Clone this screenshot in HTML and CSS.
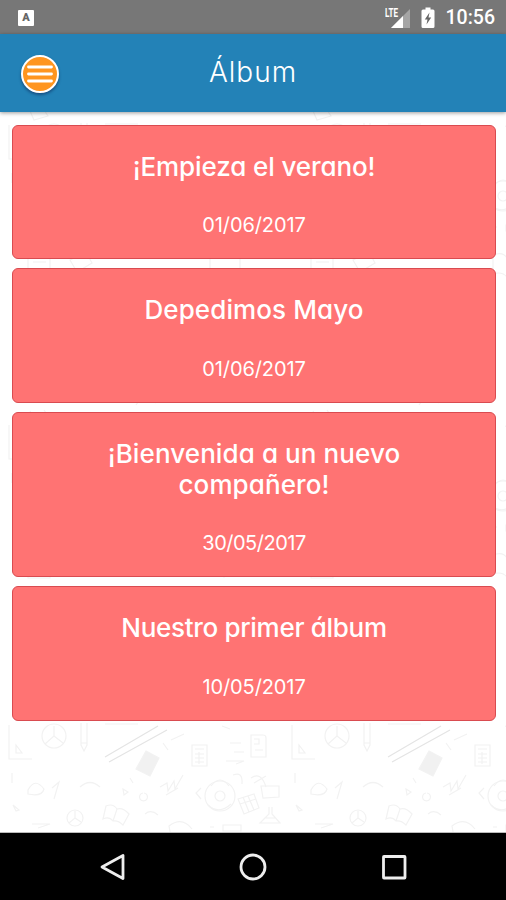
FILE: index.html
```
<!DOCTYPE html>
<html lang="es">

<head>
    <meta charset="UTF-8">
    <meta name="viewport" content="width=device-width, initial-scale=1">
    <title>Álbum</title>
    <link rel="stylesheet" href="styles.css">
</head>

<body>

    <div class="status-bar">
        <span class="app-badge">A</span>
        <div class="status-icons">
            <svg class="signal" width="28" height="22" viewBox="0 0 28 22">
                <path d="M25 2V21H6Z" fill="#a5a5a5" />
                <path d="M18 9V21H6Z" fill="#fff" />
                <text x="0" y="9.500" textLength="13" lengthAdjust="spacingAndGlyphs">LTE</text>
            </svg>
            <svg class="battery" width="14" height="22" viewBox="0 0 14 22">
                <path d="M4.500 0.500H9.500V2.500H12Q13.500 2.500 13.500 4V19.500Q13.500 21 12 21H2Q0.500 21 0.500 19.500V4Q0.500 2.500 2 2.500H4.500Z" fill="#fff" />
                <path d="M8.500 5.500L3.800 12.500H6.500L5.500 17.500L10.200 10.500H7.500Z" fill="#666" />
            </svg>
            <span class="clock">10:56</span>
        </div>
    </div>

    <header class="toolbar">
        <button class="menu" aria-label="Menú">
            <svg width="26" height="18" viewBox="0 0 26 18" stroke="#fff" stroke-width="2.800" stroke-linecap="round">
                <path d="M1.500 2H24.500M1.500 9H24.500M1.500 16H24.500" />
            </svg>
        </button>
        <h1>Álbum</h1>
    </header>

    <main class="content">
        <svg class="doodles" width="506" height="720" aria-hidden="true">
            <defs>
                <pattern id="school" x="8" y="11" width="283" height="300" patternUnits="userSpaceOnUse">
                    <g fill="none" stroke="#f2f2f2" stroke-width="1.200">
                        <!-- set square, compass, pencil -->
                        <path d="M1 2V36H24M8 22L14 30H8Z" />
                        <circle cx="46" cy="13" r="12" />
                        <path d="M46 3V13L37 21M46 13L55 20" />
                        <path d="M73 0V22L76 28L79 22V0M73 20H79" />
                        <!-- long ruler -->
                        <path d="M97 34L150 3M101 39L159 7" stroke="#e4e4e4" />
                        <path d="M97 1H130M163 17L176 11M155 20L160 27" />
                        <!-- books and calculator -->
                        <path d="M138 28L151 35L142 53L128 46Z" fill="#f1f1f1" />
                        <path d="M184 22H199V43H184ZM187 26H196M187 31H196M187 35H196M187 39H196M191 29V41" />
                        <path d="M218 38H236L228 41M222 20H233M226 29H236M214 3L222 6" />
                        <path d="M243 12H255Q258 12 258 15V34H243ZM246 16H251V21H246M247 27H255" />
                        <!-- second row -->
                        <path d="M4 50V60M20 67Q27 54 36 66Q34 74 20 71ZM44 65L51 59L46 76M72 64Q82 55 92 64" />
                        <path d="M115 66L120 69L116 72ZM122 55L125 60M135 70A4 4 0 1 0 136 70" />
                        <path d="M152 64L159 60L160 68L166 58L167 66L175 52M158 72L170 65" />
                        <circle cx="212" cy="73" r="15" />
                        <circle cx="212" cy="73" r="5" />
                        <path d="M203 63Q212 51 221 63M200 82Q211 92 223 81M193 65L188 70L193 76" />
                        <path d="M225 52Q235 48 234 61M243 55Q253 48 258 64M246 60L258 53M253 63H271V74L255 75Z" />
                        <path d="M230 76L246 71L251 85L236 91ZM235 74L241 89M240 73L246 87M232 81L248 76" />
                        <path d="M261 84V91L252 100H272L264 91V84M257 95H268" />
                        <!-- third row -->
                        <path d="M5 82L11 87L8 88ZM24 101H42L30 105" />
                        <circle cx="67" cy="95" r="8" />
                        <path d="M67 88V95L61 100M67 95L73 99" />
                        <path d="M98 83Q105 80 109 86Q115 84 121 91L115 102Q110 97 105 98Q101 93 95 96ZM109 86L105 98" />
                        <path d="M137 91Q143 86 150 92M163 114L161 103Q174 93 184 106M202 104H206M215 102H233V108H215Z" />
                        <!-- notebook, sharpener and open book -->
                        <path d="M20 135H42V155H20ZM25 139H38M62 137L78 129L84 140L69 149Z" />
                        <path d="M202 132Q212 128 216 135Q222 129 232 134V152Q222 148 216 154Q211 148 202 151Z" />
                        <path d="M4 181L36 172M118 174H140V194H118ZM165 180Q180 168 191 185" />
                        <path d="M12 220H40V237H12M112 218Q127 207 138 223M174 217H195V239H174" />
                        <path d="M22 288L26 297L40 293L36 287M128 282Q135 270 148 280" />
                    </g>
                </pattern>
            </defs>
            <rect width="506" height="720" fill="url(#school)" />
        </svg>

        <div class="albums">
            <article class="album">
                <h2>¡Empieza el verano!</h2>
                <time>01/06/2017</time>
            </article>
            <article class="album wide">
                <h2>Depedimos Mayo</h2>
                <time>01/06/2017</time>
            </article>
            <article class="album wide">
                <h2>¡Bienvenida a un nuevo compañero!</h2>
                <time class="tight">30/05/2017</time>
            </article>
            <article class="album narrow">
                <h2>Nuestro primer álbum</h2>
                <time>10/05/2017</time>
            </article>
        </div>
    </main>

    <nav class="nav-bar">
        <svg width="28" height="28" viewBox="0 0 28 28"><path d="M24 2.500V25.500L3 14Z" /></svg>
        <svg width="28" height="28" viewBox="0 0 28 28"><circle cx="14" cy="14" r="12" /></svg>
        <svg width="28" height="28" viewBox="0 0 28 28"><rect x="3.500" y="3.500" width="21.500" height="21.500" rx="0.500" /></svg>
    </nav>

</body>

</html>
```
FILE: styles.css
```
:root {
    --blue: #2382b7;
    --orange: #ff951f;
    --coral: #ff7373;
    --coral-dark: #d94b50;
    --status: #777;
}

* {
    box-sizing: border-box;
}

body {
    margin: 0;
    height: 900px;
    display: flex;
    flex-direction: column;
    overflow: hidden;
    background: #fff;
    color: #fff;
    font-family: "Century Gothic", "URW Gothic", Inter, sans-serif;
    font-feature-settings: "cv11";
}

.status-bar {
    height: 34px;
    flex: none;
    display: flex;
    align-items: center;
    justify-content: space-between;
    padding: 2px 11px 0 18px;
    background: var(--status);
    font-family: Roboto, sans-serif;
}

.app-badge {
    width: 16px;
    height: 16px;
    border-radius: 1px;
    background: #fff;
    color: #666;
    font-size: 11px;
    font-weight: 900;
    line-height: 16px;
    text-align: center;
}

.status-icons {
    display: flex;
    align-items: center;
}

.signal {
    margin-right: 8px;
}

.signal text {
    fill: #fff;
    stroke: var(--status);
    stroke-width: 1.5px;
    paint-order: stroke;
    font: 700 12px Roboto, sans-serif;
}

.battery {
    margin-right: 11px;
}

.clock {
    font-size: 19.5px;
    font-weight: 500;
    line-height: 32px;
}

.toolbar {
    position: relative;
    z-index: 1;
    height: 78px;
    flex: none;
    display: grid;
    grid-template-columns: 60px 1fr 60px;
    align-items: center;
    background: var(--blue);
    box-shadow: 0 1px 4px rgba(0, 0, 0, 0.4);
}

.toolbar h1 {
    margin: 0;
    padding-bottom: 3px;
    text-align: center;
    font-size: 28px;
    font-weight: 300;
    letter-spacing: 1px;
}

.menu {
    width: 38px;
    height: 38px;
    margin: 1px 0 0 21px;
    padding: 0;
    display: flex;
    align-items: center;
    justify-content: center;
    border: 2px solid #fff;
    border-radius: 50%;
    background: var(--orange);
    box-shadow: 0 2px 3px rgba(0, 0, 50, 0.4);
}

.content {
    position: relative;
    flex: 1;
    border-bottom: 1px solid #bbb;
}

.doodles {
    position: absolute;
    top: 0;
    left: 0;
}

.albums {
    position: relative;
    display: flex;
    flex-direction: column;
    gap: 9px;
    padding: 12.6px 10px 0 12px;
}

.album {
    padding: 25px 60px 17px;
    border: 1px solid var(--coral-dark);
    border-radius: 6px;
    background: var(--coral);
    text-align: center;
}

.album h2 {
    margin: 0 0 28.6px;
    font-size: 26px;
    font-weight: 450;
    line-height: 31px;
    letter-spacing: -0.1px;
}

.album.wide h2 {
    letter-spacing: 0.1px;
}

.album.narrow h2 {
    letter-spacing: -0.3px;
}

.album time {
    display: block;
    font-size: 20px;
    font-weight: 400;
    line-height: 31px;
    letter-spacing: -0.1px;
}

.album time.tight {
    letter-spacing: -0.5px;
}

.nav-bar {
    height: 67px;
    flex: none;
    display: flex;
    align-items: center;
    justify-content: center;
    gap: 112.5px;
    background: #000;
}

.nav-bar svg {
    fill: none;
    stroke: #eee;
    stroke-width: 2.8;
    stroke-linejoin: round;
}
```
